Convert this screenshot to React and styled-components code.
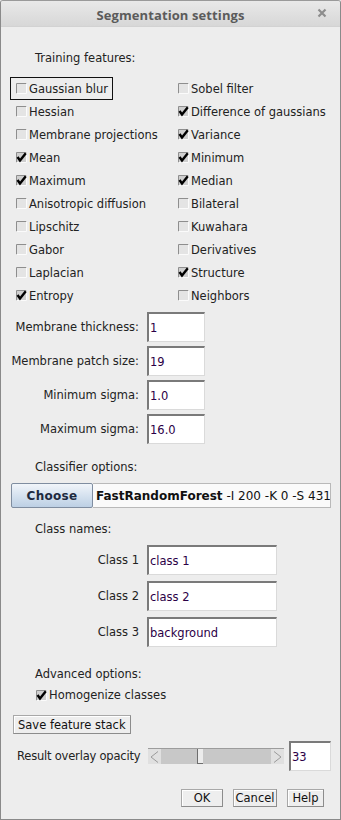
import React from "react";
import styled, { createGlobalStyle } from "styled-components";

const Global = createGlobalStyle`
  html, body { margin: 0; padding: 0; background: #ededed; }
  body { font-family: "DejaVu Sans", sans-serif; }
  * { box-sizing: border-box; }
`;

const FONT = `"DejaVu Sans", "Liberation Sans", sans-serif`;

const Window = styled.div`
  width: 341px;
  height: 820px;
  border: 1px solid #8a8a8a;
  border-top-color: #9a9a9a;
  border-radius: 3px 3px 0 0;
  background: #ededed;
  display: flex;
  flex-direction: column;
  overflow: hidden;
  font-family: ${FONT};
  font-size: 11.5px;
  color: #222;
`;

const TitleBar = styled.div`
  height: 26px;
  flex: none;
  background: linear-gradient(#e9e9e9, #d7d7d7);
  display: flex;
  align-items: center;
  justify-content: center;
  position: relative;
  border-bottom: 1px solid #d2d2d2;
`;

const Title = styled.div`
  font-family: "Open Sans", sans-serif;
  font-weight: 700;
  font-size: 13px;
  color: #5b5b5b;
  letter-spacing: 0.1px;
  margin-top: 2px;
`;

const Close = styled.div`
  position: absolute;
  right: 11px;
  top: 5px;
  width: 14px;
  height: 14px;
  display: flex;
  align-items: center;
  justify-content: center;
`;

const Body = styled.div`
  flex: 1;
  display: flex;
  flex-direction: column;
`;

const SectionLabel = styled.div`
  margin-top: ${(p) => p.$mt}px;
  padding-left: ${(p) => p.$pl ?? 34}px;
  height: 15px;
  line-height: 15px;
  white-space: nowrap;
`;

const FeatureGrid = styled.div`
  margin-top: 11px;
  display: grid;
  grid-template-columns: 168px 1fr;
  grid-auto-rows: 23px;
  padding-left: 9px;
`;

const CheckItem = styled.div`
  display: flex;
  align-items: center;
  gap: 2px;
  white-space: nowrap;
  margin-top: ${(p) => p.$mt ?? 0}px;
  padding-left: ${(p) => p.$pl ?? 6}px;
  height: ${(p) => p.$h ?? 23}px;
`;

const FocusBox = styled.div`
  display: flex;
  align-items: center;
  gap: 2px;
  border: 1px solid #111;
  padding: 0 4px 0 5px;
  height: 23px;
  width: max-content;
`;

const FieldRows = styled.div`
  margin-top: ${(p) => p.$mt}px;
  display: flex;
  flex-direction: column;
  gap: ${(p) => p.$gap}px;
`;

const FieldRow = styled.div`
  display: grid;
  grid-template-columns: ${(p) => p.$labelW}px auto;
  column-gap: 8px;
  align-items: center;
`;

const FieldLabel = styled.div`
  text-align: right;
  white-space: nowrap;
`;

const TextField = styled.div`
  width: ${(p) => p.$w}px;
  height: ${(p) => p.$h ?? 30}px;
  background: #fff;
  border: 1px solid #dadada;
  border-top: 2px solid #7a7a7a;
  border-left: 2px solid #7a7a7a;
  display: flex;
  align-items: center;
  padding-left: 1px;
  color: #2b0046;
  white-space: nowrap;
`;

const ClassifierRow = styled.div`
  margin-top: 8px;
  margin-left: 10px;
  display: flex;
  height: 25px;
`;

const ChooseButton = styled.div`
  width: 82px;
  height: 25px;
  border: 1px solid #7f8da0;
  border-radius: 2px;
  background: linear-gradient(#f1f5fa, #d3e0ee 55%, #bdd0e4);
  display: flex;
  align-items: center;
  justify-content: center;
  font-weight: 700;
  font-size: 12px;
  color: #1d2a40;
  letter-spacing: 0.3px;
`;

const ClassifierField = styled.div`
  width: 238px;
  height: 25px;
  background: #fafafa;
  border: 1px solid #b9b9b9;
  border-left: none;
  display: flex;
  align-items: center;
  padding-left: 3px;
  font-size: 12px;
  white-space: nowrap;
  overflow: hidden;
  color: #111;
  b { font-weight: 700; }
`;

const PlainButton = styled.div`
  height: ${(p) => p.$h ?? 18}px;
  width: ${(p) => (p.$w ? `${p.$w}px` : "auto")};
  padding: 0 ${(p) => p.$px ?? 4}px;
  border: 1px solid #8c8c8c;
  border-top-color: #a8a8a8;
  border-left-color: #a8a8a8;
  box-shadow: inset 1px 1px 0 #fff;
  background: #eeeeee;
  display: flex;
  align-items: center;
  justify-content: center;
  white-space: nowrap;
  color: #111;
`;

const SaveRow = styled.div`
  margin-top: 9px;
  padding-left: 12px;
  display: flex;
`;

const OpacityRow = styled.div`
  margin-top: 7px;
  padding-left: 16px;
  display: flex;
  align-items: center;
`;

const OpacityLabel = styled.div`
  width: 131px;
  white-space: nowrap;
  letter-spacing: -0.2px;
`;

const Slider = styled.div`
  width: 136px;
  height: 16px;
  display: flex;
  position: relative;
  margin-right: 5px;
  background: #c6c6c6;
  border-top: 1px solid #9c9c9c;
`;

const Arrow = styled.div`
  width: 13px;
  height: 100%;
  background: #e0e0e0;
  display: flex;
  align-items: center;
  justify-content: center;
  flex: none;
`;

const Track = styled.div`
  flex: 1;
  position: relative;
  background: #c8c8c8;
`;

const Thumb = styled.div`
  position: absolute;
  top: 0;
  width: 6px;
  height: 100%;
  background: #ececec;
  border-left: 1px solid #6e6e6e;
  border-bottom: 1px solid #6e6e6e;
`;

const ButtonBar = styled.div`
  margin-top: 18px;
  display: flex;
  justify-content: flex-end;
  gap: 10px;
  padding-right: 16px;
`;

const CheckBox = ({ checked }) => (
  <svg width="11" height="11" viewBox="0 0 11 11" style={{ flex: "none" }}>
    <rect x="0.5" y="0.5" width="10" height="10" fill={checked ? "#cfcfcf" : "#e4e4e4"} />
    <path d="M0.5 10.5 V0.5 H10.5" stroke="#8e8e8e" fill="none" />
    <path d="M0.5 10.5 H10.5 V0.5" stroke="#fbfbfb" fill="none" />
    {checked && (
      <path d="M1.5 5 L4 8.5 L9.8 1.2" stroke="#000" strokeWidth="2.4" fill="none" strokeLinejoin="miter" />
    )}
  </svg>
);

const Check = ({ label, checked, focus, pl, h, mt }) =>
  focus ? (
    <CheckItem $pl={0}>
      <FocusBox>
        <CheckBox checked={checked} />
        <span>{label}</span>
      </FocusBox>
    </CheckItem>
  ) : (
    <CheckItem $pl={pl} $h={h} $mt={mt}>
      <CheckBox checked={checked} />
      <span>{label}</span>
    </CheckItem>
  );

const features = [
  ["Gaussian blur", false, true],
  ["Sobel filter", false],
  ["Hessian", false],
  ["Difference of gaussians", true],
  ["Membrane projections", false],
  ["Variance", true],
  ["Mean", true],
  ["Minimum", true],
  ["Maximum", true],
  ["Median", true],
  ["Anisotropic diffusion", false],
  ["Bilateral", false],
  ["Lipschitz", false],
  ["Kuwahara", false],
  ["Gabor", false],
  ["Derivatives", false],
  ["Laplacian", false],
  ["Structure", true],
  ["Entropy", true],
  ["Neighbors", false],
];

const params = [
  ["Membrane thickness:", "1"],
  ["Membrane patch size:", "19"],
  ["Minimum sigma:", "1.0"],
  ["Maximum sigma:", "16.0"],
];

const classes = [
  ["Class 1", "class 1"],
  ["Class 2", "class 2"],
  ["Class 3", "background"],
];

const ArrowIcon = ({ dir }) => (
  <svg width="9" height="12" viewBox="0 0 9 12">
    {dir === "left" ? (
      <path d="M8 0.5 L1 6 L8 11.5" fill="none" stroke="#9a9a9a" />
    ) : (
      <path d="M1 0.5 L8 6 L1 11.5" fill="none" stroke="#9a9a9a" />
    )}
  </svg>
);

export default function App() {
  const opacity = 33;
  return (
    <>
      <Global />
      <Window>
        <TitleBar>
          <Title>Segmentation settings</Title>
          <Close>
            <svg width="10" height="10" viewBox="0 0 10 10">
              <path d="M1.5 1.5 L8.5 8.5 M8.5 1.5 L1.5 8.5" stroke="#8d8d8d" strokeWidth="2.2" />
            </svg>
          </Close>
        </TitleBar>
        <Body>
          <SectionLabel $mt={24}>Training features:</SectionLabel>
          <FeatureGrid>
            {features.map(([l, c, f], i) => (
              <Check key={i} label={l} checked={c} focus={f} pl={i % 2 ? 0 : 6} />
            ))}
          </FeatureGrid>
          <FieldRows $mt={5} $gap={4}>
            {params.map(([l, v]) => (
              <FieldRow key={l} $labelW={138}>
                <FieldLabel>{l}</FieldLabel>
                <TextField $w={58}>{v}</TextField>
              </FieldRow>
            ))}
          </FieldRows>
          <SectionLabel $mt={16}>Classifier options:</SectionLabel>
          <ClassifierRow>
            <ChooseButton>Choose</ChooseButton>
            <ClassifierField>
              <b>FastRandomForest</b>&nbsp;-I 200 -K 0 -S 431
            </ClassifierField>
          </ClassifierRow>
          <SectionLabel $mt={14}>Class names:</SectionLabel>
          <FieldRows $mt={8} $gap={6}>
            {classes.map(([l, v]) => (
              <FieldRow key={l} $labelW={138}>
                <FieldLabel>{l}</FieldLabel>
                <TextField $w={130}>{v}</TextField>
              </FieldRow>
            ))}
          </FieldRows>
          <SectionLabel $mt={20}>Advanced options:</SectionLabel>
          <Check label="Homogenize classes" checked pl={35} h={22} mt={2} />
          <SaveRow>
            <PlainButton $h={19}>Save feature stack</PlainButton>
          </SaveRow>
          <OpacityRow>
            <OpacityLabel>Result overlay opacity</OpacityLabel>
            <Slider>
              <Arrow>
                <ArrowIcon dir="left" />
              </Arrow>
              <Track>
                <Thumb style={{ left: `${opacity}%` }} />
              </Track>
              <Arrow>
                <ArrowIcon dir="right" />
              </Arrow>
            </Slider>
            <TextField $w={42} $h={30}>{String(opacity)}</TextField>
          </OpacityRow>
          <ButtonBar>
            <PlainButton $w={42}>OK</PlainButton>
            <PlainButton $w={44}>Cancel</PlainButton>
            <PlainButton $w={37}>Help</PlainButton>
          </ButtonBar>
        </Body>
      </Window>
    </>
  );
}
